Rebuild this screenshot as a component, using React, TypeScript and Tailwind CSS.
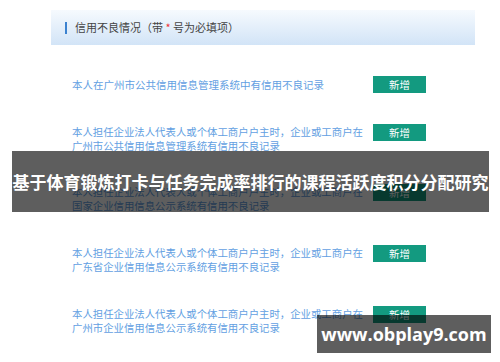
import React from "react"

const cjk = { fontFamily: '"Noto Sans CJK SC", "Liberation Sans", sans-serif' }

const rows: { lines: string[]; mt: string }[] = [
    { lines: ["本人担任企业法人代表人或个体工商户户主时，企业或工商户在", "广州市公共信用信息管理系统有信用不良记录"], mt: "mt-[31px]" },
    { lines: ["本人担任企业法人代表人或个体工商户户主时，企业或工商户在", "国家企业信用信息公示系统有信用不良记录"], mt: "mt-[31px]" },
    { lines: ["本人担任企业法人代表人或个体工商户户主时，企业或工商户在", "广东省企业信用信息公示系统有信用不良记录"], mt: "mt-[32px]" },
    { lines: ["本人担任企业法人代表人或个体工商户户主时，企业或工商户在", "广州市企业信用信息公示系统有信用不良记录"], mt: "mt-[32px]" },
]

const AddButton = () => (
    <div className="w-[53px] h-[17px] shrink-0 bg-[#139a80] text-white text-[10.5px] leading-[17px] text-center">新增</div>
)

export default function App() {
    return (
        <div className="relative w-[500px] h-[362px] overflow-hidden bg-white" style={cjk}>
            <div className="pt-[10px]">
                <div className="ml-[51px] w-[424px] h-[35px] flex items-center bg-gradient-to-b from-[#f6fafe] to-[#d2e4f7]">
                    <span className="ml-[14px] w-[2px] h-[12px] bg-[#3b82d0]" />
                    <span className="ml-[8px] text-[11px] text-[#444]">
                        信用不良情况（带 <span className="text-[#e33]">*</span> 号为必填项）
                    </span>
                </div>

                <div className="mt-[31px] ml-[72px] flex items-center">
                    <p className="w-[301px] text-[10.5px] leading-[17px] text-[#62a0e2]">本人在广州市公共信用信息管理系统中有信用不良记录</p>
                    <AddButton />
                </div>

                {rows.map((r, i) => (
                    <div key={i} className={`${r.mt} ml-[72px] flex items-start`}>
                        <div className="w-[301px] pt-[1px] text-[10.4px] leading-[14px] text-[#62a0e2]">
                            {r.lines.map((l) => (
                                <p key={l} className="whitespace-nowrap">{l}</p>
                            ))}
                        </div>
                        <AddButton />
                    </div>
                ))}
            </div>

            <div className="absolute left-[12px] top-[151px] w-[477px] h-[61px] bg-black/[0.63] flex items-center justify-center">
                <span className="text-white font-bold text-[17px] whitespace-nowrap">基于体育锻炼打卡与任务完成率排行的课程活跃度积分分配研究</span>
            </div>

            <div className="absolute left-[317px] top-[315px] w-[174px] h-[38px] bg-black/[0.63] flex items-center justify-center">
                <span className="text-white font-bold text-[18px]" style={{ fontFamily: '"Open Sans", sans-serif' }}>www.obplay9.com</span>
            </div>
        </div>
    )
}
